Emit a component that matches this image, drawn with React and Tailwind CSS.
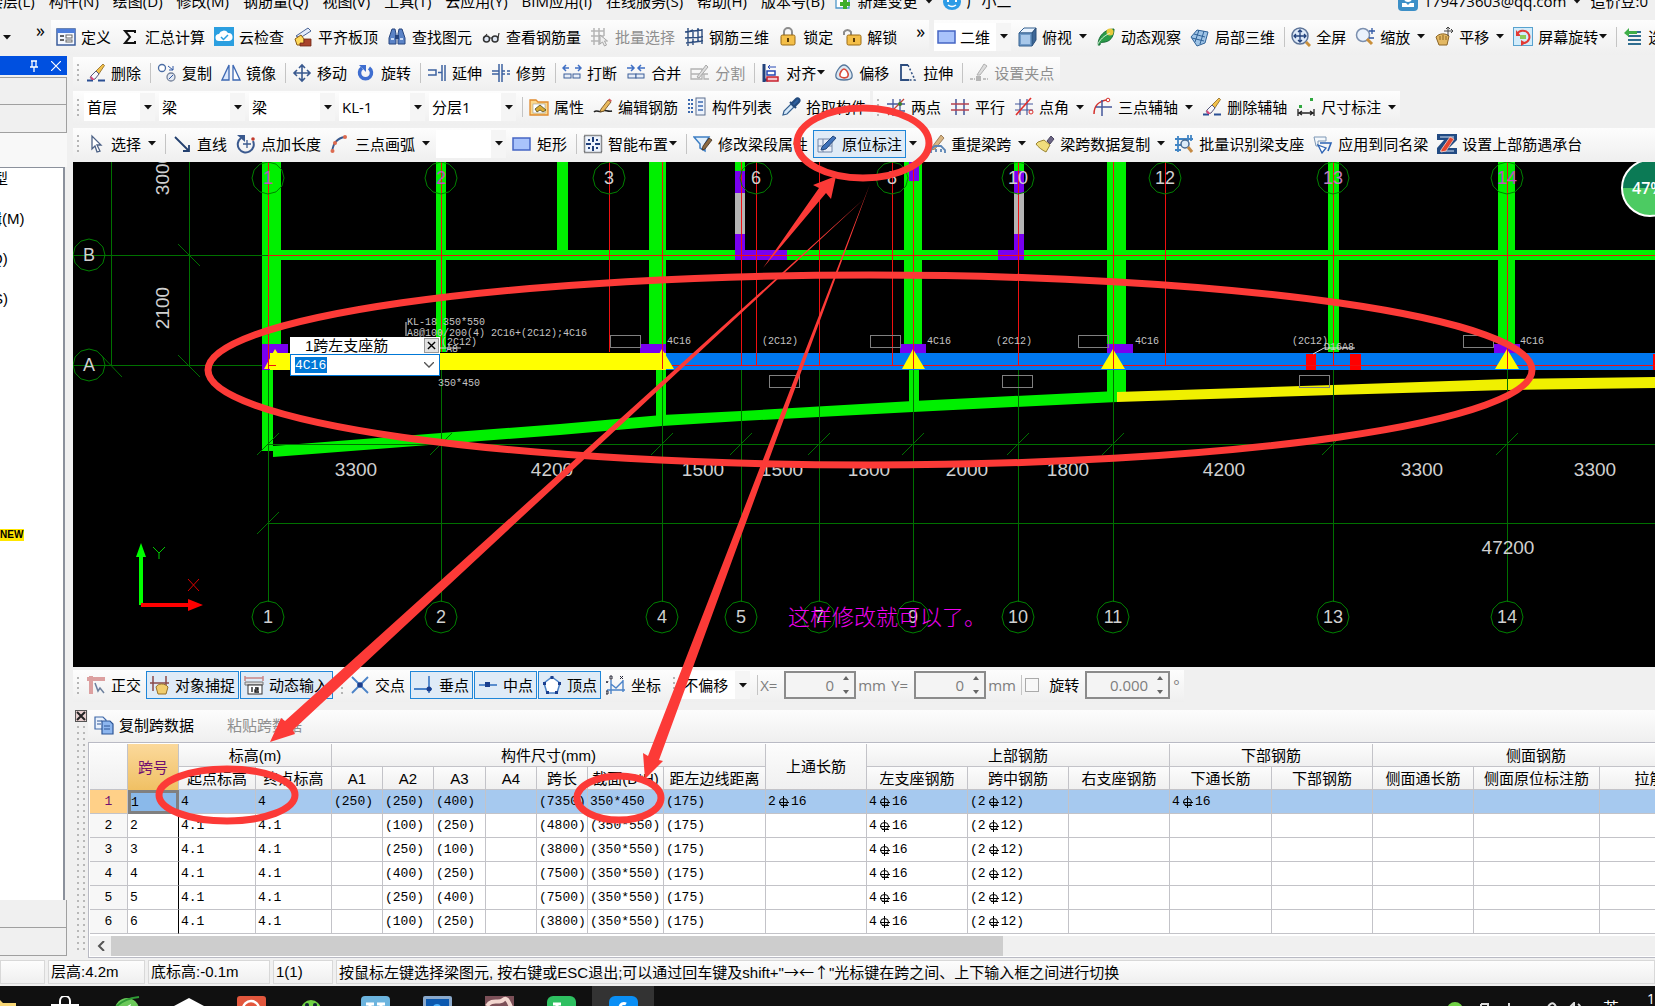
import { useState } from 'react';

const UI_FONT = 'font-["Open_Sans","Noto_Sans_CJK_SC",sans-serif]';
const SONG_FONT = 'font-["Liberation_Sans","Noto_Sans_CJK_SC",sans-serif]';
const RED = '#fc3a37';

/* ---------- toolbar icons, all on a 20x20 grid ---------- */

const eraser = (
    <>
        <path d="M1 17.5h6M12 17.5h7" stroke="#2a4f94" strokeWidth="2" />
        <path d="M9 9l8-8 1.5 1.5-6 9z" fill="#f2c14b" stroke="#8a6520" strokeWidth=".8" />
        <path d="M5 13l5-5 3 3-4 5c-3 1.5-6-1-4-3z" fill="#f7f7fb" stroke="#55557a" />
        <path d="M5 13l3.5 3.5-1 .5c-2 .5-4-2-2.5-4z" fill="#d9467a" />
    </>
);

const pencil = (
    <>
        <path d="M1 15c3-3 5 1 8-1s5 1 10 0" fill="none" stroke="#222" strokeWidth="1.6" />
        <path d="M8 12l7-9 3 2-7 9-4 1z" fill="#e9b95c" stroke="#6b4a1c" strokeWidth=".8" />
        <path d="M15 3l3 2 .8-1.5-2.5-2z" fill="#d65a5a" />
    </>
);

const ICONS = {
    define: (
        <>
            <rect x="1" y="2" width="18" height="16" fill="#f3f7ff" stroke="#3b5d9c" strokeWidth="1.5" />
            <rect x="1" y="2" width="18" height="4" fill="#4d7ddb" />
            <path d="M4 9h4M4 13h4" stroke="#333" strokeWidth="1.5" />
            <rect x="10" y="8" width="6" height="3" fill="#fff" stroke="#666" />
            <rect x="10" y="13" width="6" height="2" fill="#fff" stroke="#666" />
        </>
    ),
    sigma: <path d="M15 6V4H5l5 6-5 6h10v-2" fill="none" stroke="#111" strokeWidth="2" />,
    cloud: (
        <>
            <rect width="20" height="19" fill="#2b9fe0" />
            <path d="M5 14a3.5 3.5 0 010-7 5 5 0 019-1 4 4 0 011 8z" fill="#fff" />
            <path d="M7 10l2.5 2.5L14 8" fill="none" stroke="#2b9fe0" strokeWidth="1.5" />
        </>
    ),
    slab: (
        <>
            <path d="M3 9L15 1l3 3-11 7z" fill="#e4ecfa" stroke="#4a6496" />
            <path d="M2 12l6-4 3 4v6H4z" fill="#ffd95a" stroke="#8a5a12" />
            <path d="M11 12h7v7H7v-3h4z" fill="#a8432c" stroke="#6e2614" strokeWidth=".8" />
        </>
    ),
    find: (
        <>
            <path d="M5 2h3l1 5v10H2v-6zM12 2h3l3 9v6h-7V7z" fill="#5b83c6" stroke="#27457e" />
            <rect x="8" y="8" width="4" height="4" fill="#27457e" />
            <path d="M4 12h3M13 12h3" stroke="#c9daf5" strokeWidth="2" />
        </>
    ),
    glasses: (
        <>
            <circle cx="5.5" cy="12" r="3" fill="#dde6f3" stroke="#333" strokeWidth="1.5" />
            <circle cx="14" cy="12" r="3" fill="#dde6f3" stroke="#333" strokeWidth="1.5" />
            <path d="M8.5 11h2.5M3 11l3-4M17 11l1-5" stroke="#333" strokeWidth="1.2" fill="none" />
        </>
    ),
    batch: (
        <>
            <path d="M1 4h13M1 9h13M1 14h8M4 1v17M9 1v17M14 1v8" stroke="#b5b5b5" strokeWidth="1.5" />
            <path d="M10 8v9l2.5-2 2 4 2-1-2-4h3z" fill="#eee" stroke="#a5a5a5" />
        </>
    ),
    rebar3d: (
        <path d="M4 1v18M9 3v15M14 1v14M18 2v15M1 5l17-2M1 11l18-1M2 16l17-2M4 5l5-2" fill="none" stroke="#2d4d7f" strokeWidth="1.4" />
    ),
    lock: (
        <>
            <path d="M6 9V5a4 4 0 018 0v4" fill="none" stroke="#8d8d8d" strokeWidth="2" />
            <rect x="3" y="8" width="14" height="10" rx="1.5" fill="#f4bf49" stroke="#9a6a14" />
            <path d="M10 11v4" stroke="#5a3b07" strokeWidth="2" />
        </>
    ),
    unlock: (
        <>
            <path d="M2 8V5a4 4 0 017 0v4" fill="none" stroke="#8d8d8d" strokeWidth="2" />
            <rect x="5" y="8" width="14" height="10" rx="1.5" fill="#f4bf49" stroke="#9a6a14" />
            <path d="M12 11v4" stroke="#5a3b07" strokeWidth="2" />
        </>
    ),
    rect: <rect x="1" y="4" width="17" height="12" fill="#a9c3fb" stroke="#4565c4" strokeWidth="1.5" />,
    cube: (
        <>
            <path d="M2 6l5-5h12l-4 5z" fill="#eaf4ff" stroke="#35608f" />
            <path d="M15 6l4-5v12l-4 6z" fill="#3d6797" stroke="#2d4f78" />
            <path d="M2 6h13v13H2z" fill="#6f9ac8" stroke="#35608f" />
            <path d="M4 8h9v9H4z" fill="#a8c8ea" />
        </>
    ),
    orbit: (
        <>
            <path d="M2 18C2 9 9 2 18 2c0 5-2 12-9 13-3 .5-5 0-5 3z" fill="#2b9c49" stroke="#146b33" />
            <circle cx="14" cy="5" r="3.5" fill="#e8c93c" />
            <path d="M1 19c3-7 7-10 13-13" fill="none" stroke="#d7f0dc" />
        </>
    ),
    local3d: (
        <>
            <path d="M1 10l6-7 11 2-3 11-8 3z" fill="#9fc4e6" stroke="#2f6297" />
            <path d="M4 7l11 3M9 3L5 15M14 4l-4 13M2 11l12 3" stroke="#2f6297" fill="none" />
        </>
    ),
    full: (
        <>
            <circle cx="9" cy="9" r="8" fill="#dde9f8" stroke="#5c7397" strokeWidth="1.5" />
            <path d="M9 3v12M3 9h12M7 5l2-2 2 2M7 13l2 2 2-2M5 7L3 9l2 2M13 7l2 2-2 2" fill="none" stroke="#22417b" strokeWidth="1.3" />
            <path d="M15 15l4 4" stroke="#c98f3a" strokeWidth="3" />
        </>
    ),
    zoom: (
        <>
            <circle cx="8" cy="8" r="6.5" fill="#eaf2fc" stroke="#7b8fae" strokeWidth="1.5" />
            <path d="M12 12l5 5" stroke="#c98f3a" strokeWidth="3" />
            <path d="M17 1v6M14 4h6M14 11h5" stroke="#2f57a4" strokeWidth="1.3" />
        </>
    ),
    pan: (
        <>
            <path d="M2 10c3-4 10-4 13-1l-2 9H5z" fill="#e3b863" stroke="#8b6425" />
            <path d="M6 9v4M9 8v5M12 9v4" stroke="#8b6425" />
            <path d="M14 0v9M10 4h9M12 2l2-2 2 2M17 2l2 2-2 2" fill="none" stroke="#444" />
        </>
    ),
    screen: (
        <>
            <rect x=".5" y=".5" width="19" height="18" fill="#d3ecfa" stroke="#58a2cf" />
            <path d="M4 7a7 7 0 0111-1c3 4 1 9-4 10" fill="none" stroke="#e23b35" strokeWidth="2" />
            <path d="M3 3v6h5zM8 13v6l5-3z" fill="#e23b35" />
            <rect x="7" y="8" width="6" height="4" fill="#8ccb5b" />
        </>
    ),
    layers: (
        <>
            <path d="M3 5h15M5 9h13M5 13h13M5 17h13" stroke="#2f6d90" strokeWidth="2" />
            <path d="M1 6l5-5v3h8v3H6v3z" fill="#3fae49" />
        </>
    ),
    eraser,
    copy: (
        <>
            <circle cx="5" cy="5" r="3.5" fill="#fff" stroke="#4b6da4" strokeWidth="1.3" />
            <circle cx="14" cy="14" r="4" fill="#e4e9f2" stroke="#76839b" strokeWidth="1.3" />
            <path d="M11 3l5 4M16 3v4h-4M12 16l4-4" stroke="#2f57a4" fill="none" />
        </>
    ),
    mirror: (
        <>
            <path d="M8 2v15H1z" fill="#dae7fb" stroke="#3d68b3" strokeWidth="1.3" />
            <path d="M12 2v15h7z" fill="#fff" stroke="#3d68b3" strokeWidth="1.3" />
        </>
    ),
    move: (
        <path d="M10 2v16M2 10h16M7 5l3-3 3 3M7 15l3 3 3-3M5 7l-3 3 3 3M15 7l3 3-3 3" fill="none" stroke="#39598f" strokeWidth="1.6" />
    ),
    rotate: (
        <>
            <path d="M6 5a6 6 0 107 0" fill="none" stroke="#3f6ed0" strokeWidth="3.5" />
            <path d="M3 2h7v7z" fill="#3f6ed0" />
        </>
    ),
    extend: (
        <>
            <path d="M1 7h8v5H1M11 9.5h4" fill="none" stroke="#3d62a0" strokeWidth="1.5" />
            <path d="M15 2v16M18 2v16" stroke="#3d62a0" strokeWidth="1.5" />
        </>
    ),
    trim: (
        <>
            <path d="M8 1v18M11 1v18" stroke="#3d62a0" strokeWidth="1.5" />
            <path d="M1 8h7M1 11h7M11 8h3M11 11h3M16 8h3M16 11h3" stroke="#3d62a0" strokeWidth="1.5" />
        </>
    ),
    split: (
        <>
            <path d="M1 5h6M13 5h6M4 2L1 5l3 3M16 2l3 3-3 3" fill="none" stroke="#3f6fc4" strokeWidth="1.5" />
            <rect x="2" y="11" width="7" height="4" fill="#e6edf8" stroke="#3d5f98" />
            <rect x="11" y="11" width="7" height="4" fill="#e6edf8" stroke="#3d5f98" />
        </>
    ),
    merge: (
        <>
            <path d="M1 5h6M13 5h6M5 2l3 3-3 3M15 2l-3 3 3 3" fill="none" stroke="#3f6fc4" strokeWidth="1.5" />
            <rect x="2" y="11" width="8" height="4" fill="#e6edf8" stroke="#3d5f98" />
            <rect x="10" y="11" width="8" height="4" fill="#e6edf8" stroke="#3d5f98" />
        </>
    ),
    divide: (
        <>
            <path d="M1 6h11v10H1zM1 11h17M14 11v5h5" fill="none" stroke="#b3b3b3" strokeWidth="1.3" />
            <path d="M7 14l9-12 2 2-9 11z" fill="#ddd" stroke="#a9a9a9" />
        </>
    ),
    align: (
        <>
            <path d="M3 1v18" stroke="#22417b" strokeWidth="3" />
            <path d="M2 17h5" stroke="#22417b" strokeWidth="3" />
            <rect x="6" y="8" width="8" height="4" fill="#fff" stroke="#2748b5" strokeWidth="1.5" />
            <rect x="6" y="14" width="11" height="4" fill="#f4c1c8" stroke="#c8202e" strokeWidth="1.5" />
            <path d="M7 4h8M9 2L7 4l2 2" stroke="#2748b5" fill="none" />
        </>
    ),
    offset: (
        <>
            <path d="M10 2c4 0 9 8 8 12s-15 4-16 0 4-12 8-12z" fill="#dbe7f2" stroke="#56789c" strokeWidth="1.3" />
            <path d="M10 6c2 0 5 4 4 7s-7 2-8 0 2-7 4-7z" fill="#fff" stroke="#d84a3a" strokeWidth="1.6" />
        </>
    ),
    stretch: (
        <>
            <path d="M10 2H3v15h8" fill="none" stroke="#2d4d7f" strokeWidth="1.8" />
            <path d="M10 2l7 15h-6" fill="none" stroke="#2d4d7f" strokeWidth="1.5" strokeDasharray="2 2" />
        </>
    ),
    grip: (
        <>
            <path d="M1 16h5M14 16h5" stroke="#b0b0b0" strokeWidth="1.5" strokeDasharray="3 1" />
            <rect x="7" y="13" width="5" height="5" fill="#b5b5b5" />
            <path d="M8 12l7-11 3 2-7 9z" fill="#ddd" stroke="#b0b0b0" />
        </>
    ),
    props: (
        <>
            <path d="M1 3h6l2 2h10v13H1z" fill="#fbd88c" stroke="#e08a2e" strokeWidth="1.3" />
            <rect x="4" y="7" width="12" height="9" fill="#fff" stroke="#999" strokeWidth=".6" />
            <path d="M6 12l5-4 6 5-3 2-3-2-3 2z" fill="#d9a932" stroke="#4a4a20" strokeWidth=".8" />
        </>
    ),
    pencil,
    list: (
        <>
            <path d="M1 3h5M1 7h5M1 11h5M1 15h5" stroke="#3c69ae" strokeWidth="2" strokeDasharray="2 1" />
            <rect x="9" y="1" width="9" height="17" fill="#edf3fc" stroke="#5c6f8e" />
            <path d="M11 5h5M11 9h5M11 13h5" stroke="#3c69ae" strokeWidth="1.5" />
        </>
    ),
    picker: (
        <>
            <path d="M2 18l1-4 7-7 3 3-7 7z" fill="#d6e9fa" stroke="#35608f" strokeWidth="1.2" />
            <path d="M9 5l6 6M11 6l4-4c2-2 5 1 3 3l-4 4" fill="#2e5f9e" stroke="#234a7d" strokeWidth="2" />
        </>
    ),
    twoPoint: (
        <>
            <path d="M7 2v17M14 2v17M1 7h18M1 14h18" stroke="#44579b" strokeWidth="1.3" />
            <path d="M2 18L18 2" stroke="#c43f33" strokeWidth="1.3" />
            <circle cx="14" cy="7" r="2" fill="#3d7f2c" />
        </>
    ),
    parallel: (
        <>
            <path d="M6 2v16M14 2v16" stroke="#44579b" strokeWidth="1.5" />
            <path d="M1 7h18M1 13h18" stroke="#b5424f" strokeWidth="1.5" />
        </>
    ),
    angle: (
        <>
            <path d="M6 2v16M13 2v16M1 7h18M1 13h18" stroke="#44579b" strokeWidth="1.2" />
            <path d="M2 18L17 1" stroke="#e0302c" strokeWidth="1.6" />
            <circle cx="17" cy="15" r="2" fill="none" stroke="#e0302c" />
        </>
    ),
    threeAxis: (
        <>
            <path d="M1 17C1 9 6 4 14 3" fill="none" stroke="#d4302c" strokeWidth="1.5" />
            <path d="M9 3v16M3 10h16" stroke="#44579b" strokeWidth="1.5" />
            <circle cx="15" cy="3" r="1.8" fill="#fff" stroke="#d4302c" />
        </>
    ),
    dim: (
        <>
            <path d="M2 12v7M18 12v7M3 16h14M6 14l-3 2 3 2M14 14l3 2-3 2" fill="none" stroke="#222" strokeWidth="1.3" />
            <path d="M3 8h3v3H3zM14 1h3v3h-3z" fill="#2fa83e" />
        </>
    ),
    cursor: <path d="M6 2v13l3-3 2 6 3-1-3-6h4z" fill="#fff" stroke="#4d6286" strokeWidth="1.3" />,
    line: <path d="M3 3l14 14M17 11v6h-6" fill="none" stroke="#23406f" strokeWidth="1.8" />,
    addLen: (
        <>
            <path d="M5 4a8 8 0 1012 3" fill="none" stroke="#3a598e" strokeWidth="2" />
            <path d="M1 1h8v7z" fill="#3a598e" />
            <path d="M11 6v8M7 10h8" stroke="#3a598e" strokeWidth="1.3" />
            <circle cx="17" cy="5" r="1.8" fill="#c23a2c" />
        </>
    ),
    arc: (
        <>
            <path d="M2 18C3 9 7 4 15 3" fill="none" stroke="#3a598e" strokeWidth="1.8" />
            <circle cx="15" cy="3" r="2" fill="#dc6b50" />
            <circle cx="5" cy="9" r="2" fill="#dc6b50" />
            <circle cx="2.5" cy="17" r="2" fill="#dc6b50" />
        </>
    ),
    smart: (
        <>
            <rect x="1.5" y="1.5" width="17" height="17" fill="#eef4fd" stroke="#222" strokeDasharray="1 1" strokeWidth="1.5" />
            <path d="M10 3v5M10 12v5M3 10h5M12 10h5" stroke="#22417b" strokeWidth="2" />
            <path d="M5 5h2v2H5zM13 5h2v2h-2zM5 13h2v2H5zM13 13h2v2h-2z" fill="#22417b" />
        </>
    ),
    modify: (
        <>
            <path d="M1 3h15l-4 7v7l-5-3v-4z" fill="#e3f0fb" stroke="#3f7fc4" strokeWidth="1.5" />
            <path d="M10 12l6-8 3 2-7 9-3 1z" fill="#8c6a43" stroke="#3f2d1c" strokeWidth=".8" />
        </>
    ),
    origin: (
        <>
            <path d="M1 5h14v13H1zM6 5v13M1 12h14" fill="#e8eef8" stroke="#7086a8" />
            <path d="M5 13L16 2l3 2L9 15l-5 1z" fill="#3f72b9" stroke="#24487d" />
        </>
    ),
    respan: (
        <>
            <path d="M6 13l9-12 3 3-9 11-4 1z" fill="#d8b583" stroke="#8c6a43" strokeWidth=".8" />
            <path d="M5 19v-4l4-3h6l4 4v3M10 18v-3M15 18v-3" fill="none" stroke="#5a84b5" strokeWidth="1.8" />
        </>
    ),
    brush: (
        <>
            <path d="M12 7l4-5 3 3-4 5z" fill="#6d6685" stroke="#4b4660" />
            <path d="M3 8l6-2 6 5-4 7C7 16 3 13 1 10z" fill="#f0dd7c" stroke="#9a8432" />
        </>
    ),
    identify: (
        <>
            <path d="M1 5h18M1 11h6M1 16h6M4 2v16M14 1v6M17 1v6" stroke="#4185c5" strokeWidth="1.8" />
            <circle cx="11" cy="10" r="4" fill="#dcebf8" stroke="#486a92" strokeWidth="1.5" />
            <path d="M14 13l4 5" stroke="#c58a43" strokeWidth="3" />
        </>
    ),
    apply: (
        <>
            <path d="M1 3h12v4H5v5H3z" fill="#f4f8fc" stroke="#7c97b5" />
            <path d="M7 9h11l-3 8" fill="none" stroke="#2d63b4" strokeWidth="1.6" />
            <path d="M5 11l8 3-4 5z" fill="#fff" stroke="#2d63b4" strokeWidth="1.3" />
        </>
    ),
    top: (
        <>
            <path d="M0 0h20v6l-8 8h8v6H0v-6l7-8H0z" fill="#224b83" />
            <path d="M3 3h14M3 17h14" stroke="#d3e3f5" />
            <path d="M4 16L13 3l4 2-8 12-5 1z" fill="#e4462f" stroke="#f7d1c8" strokeWidth=".8" />
        </>
    ),
    ortho: (
        <>
            <path d="M1 4h18M5 1v18" stroke="#dca0a0" strokeWidth="4" />
            <path d="M9 8l3 8 2-3 4 5" fill="#eef" stroke="#6d809d" strokeWidth="1.5" />
        </>
    ),
    snap: (
        <>
            <path d="M3 1v15M16 1v15M0 8h19" stroke="#8a4b4b" strokeWidth="1.5" />
            <path d="M6 12c2-4 9-4 12 0l-2 7H8z" fill="#f1cd6d" stroke="#977027" />
        </>
    ),
    dyn: (
        <>
            <path d="M1 1v5M19 1v5M1 3h18" stroke="#c98787" strokeWidth="1.5" />
            <path d="M1 7h18v3H1z" fill="#ddd" stroke="#777" />
            <rect x="4" y="10" width="14" height="9" fill="#fff" stroke="#333" />
            <path d="M8 12v5M11 13h3v2h-3v2h4" fill="none" stroke="#111" strokeWidth="1.3" />
        </>
    ),
    cross: (
        <>
            <path d="M2 2l16 16M18 2L2 18" stroke="#4b83c8" strokeWidth="1.8" />
            <circle cx="10" cy="10" r="2.8" fill="#1b3f8e" />
        </>
    ),
    perp: (
        <>
            <path d="M0 14h18M15 1v17" stroke="#4b83c8" strokeWidth="1.8" />
            <circle cx="15" cy="14" r="2.5" fill="#1b3f8e" />
        </>
    ),
    mid: (
        <>
            <path d="M1 10h18" stroke="#4b83c8" strokeWidth="1.8" />
            <rect x="7" y="7" width="5" height="5" fill="#1b3f8e" />
        </>
    ),
    vertex: (
        <>
            <path d="M10 2l8 6-3 10H5L2 8z" fill="#fff" stroke="#4b83c8" strokeWidth="1.5" />
            <path d="M8.5 1h3v3h-3zM16 7h3v3h-3zM13 16h3v3h-3zM4 16h3v3H4zM1 7h3v3H1z" fill="#1b3f8e" />
        </>
    ),
    coord: (
        <>
            <path d="M5 5v14M1 15h18M5 9l5 4 7-7M17 5v12" fill="none" stroke="#4b83c8" strokeWidth="1.4" />
            <path d="M4 1h2v3H4zM14 1l3 3M17 1l-3 3M0 6l1 2 1-2M0 16h2v3H0z" fill="none" stroke="#223" />
        </>
    ),
    copyDoc: (
        <>
            <path d="M1 2h8l3 3v9H1z" fill="#eaf2fd" stroke="#3f68a8" strokeWidth="1.2" />
            <path d="M8 6h8l3 3v10H8z" fill="#8db6ef" stroke="#2d5595" strokeWidth="1.2" />
            <path d="M3 6h5M3 9h4M10 11h6M10 14h6" stroke="#2d5595" />
        </>
    ),
    newDoc: (
        <>
            <path d="M3 0h13v17H3z" fill="#fff" stroke="#4f97c9" strokeWidth="1.3" />
            <path d="M12 8v10M7 13h10" stroke="#3fae2b" strokeWidth="4" />
        </>
    ),
    bot: (
        <>
            <ellipse cx="10" cy="11" rx="9" ry="8" fill="#2d9be6" />
            <path d="M5 9h2v2H5zM13 9h2v2h-2z" fill="#fff" />
            <path d="M6 14q4 3 8 0" fill="none" stroke="#fff" strokeWidth="1.5" />
        </>
    ),
    user: (
        <>
            <rect width="20" height="20" rx="4" fill="#3c8fc7" />
            <circle cx="10" cy="7" r="4" fill="#fff" />
            <path d="M4 16v-4h4l2 2 2-2h4v4z" fill="#fff" />
        </>
    ),
};

function Icon({ name }) {
    return (
        <svg viewBox="0 0 20 20" className="h-5 w-5 shrink-0" aria-hidden="true">
            {ICONS[name]}
        </svg>
    );
}

function Caret() {
    return (
        <svg viewBox="0 0 8 5" className="h-[5px] w-2 shrink-0" aria-hidden="true">
            <path d="M0 0h8L4 4.5z" fill="#111" />
        </svg>
    );
}

/* caret: 'wide' for the split drop-downs, 'tight' for the ones glued to the label */
function Tool({ icon, label, caret, active, disabled }) {
    const state = active ? 'h-7 -mx-1 border border-[#1f86d8] bg-[#dfebf7] px-[3px]' : 'h-7';
    return (
        <div className="flex shrink-0 items-center">
            <button
                type="button"
                disabled={disabled}
                className={`flex items-center gap-[5px] whitespace-nowrap ${state} ${disabled ? 'text-[#8f8f8f]' : 'text-black'}`}
            >
                <Icon name={icon} />
                {label}
            </button>
            {caret === 'wide' && (
                <span className="flex w-[15px] justify-end">
                    <Caret />
                </span>
            )}
            {caret === 'tight' && (
                <span className="flex w-[9px] justify-end">
                    <Caret />
                </span>
            )}
        </div>
    );
}

function Sep() {
    return <span className="-mr-[3px] h-5 w-px shrink-0 bg-[#c4c4c4]" />;
}

function Grip() {
    return (
        <span className="-mr-1 flex w-1 shrink-0 flex-col gap-[3px]">
            {[0, 1, 2, 3].map((i) => (
                <i key={i} className="h-[2px] w-[2px] bg-[#b5b5b5]" />
            ))}
        </span>
    );
}

function Bar({ className = '', children }) {
    return (
        <div className={`flex shrink-0 items-center gap-[9px] bg-linear-to-b from-[#fdfdfd] to-[#efefef] pb-[2px] ${className}`}>
            {children}
        </div>
    );
}

function Combo({ label, value, width, children }) {
    return (
        <div className={`flex h-7 shrink-0 items-center bg-white ${width}`}>
            {children}
            <select aria-label={label} defaultValue={value} className="h-full min-w-0 flex-1 appearance-none bg-transparent pl-[3px] outline-none">
                <option value={value}>{value}</option>
            </select>
            <span className="flex h-full w-[15px] shrink-0 items-center justify-center bg-[#f5f5f5]">
                <Caret />
            </span>
        </div>
    );
}

/* ---------- menu and toolbars ---------- */

const MENUS = ['楼层(L)', '构件(N)', '绘图(D)', '修改(M)', '钢筋量(Q)', '视图(V)', '工具(T)', '云应用(Y)', 'BIM应用(I)', '在线服务(S)', '帮助(H)', '版本号(B)'];

function MenuBar() {
    return (
        <div className="h-5 overflow-hidden">
            <nav className="-mt-[11px] -ml-3 flex h-6 items-center whitespace-nowrap">
                <div className="flex items-center gap-[14px]">
                    {MENUS.map((m) => (
                        <button key={m} type="button">{m}</button>
                    ))}
                </div>
                <div className="ml-2 flex items-center gap-[9px]">
                    <Tool icon="newDoc" label="新建变更" caret="wide" />
                    <Tool icon="bot" label="广小二" />
                </div>
                <div className="ml-auto flex items-center gap-[9px] pr-[7px]">
                    <Tool icon="user" label="179473603@qq.com" caret="wide" />
                    <button type="button">造价豆:0</button>
                </div>
            </nav>
        </div>
    );
}

function ViewBar() {
    return (
        <div className="flex h-[35px] overflow-hidden">
            <div className="flex w-[51px] shrink-0 items-center pl-[3px]">
                <Caret />
                <span className="mb-4 ml-auto pr-[6px] text-lg leading-none">»</span>
            </div>
            <Bar className="mr-[5px] pr-1 pb-1 pl-[5px]">
                <Tool icon="define" label="定义" />
                <Tool icon="sigma" label="汇总计算" />
                <Tool icon="cloud" label="云检查" />
                <Tool icon="slab" label="平齐板顶" />
                <Tool icon="find" label="查找图元" />
                <Tool icon="glasses" label="查看钢筋量" />
                <Tool icon="batch" label="批量选择" disabled />
                <Tool icon="rebar3d" label="钢筋三维" />
                <Tool icon="lock" label="锁定" />
                <Tool icon="unlock" label="解锁" />
                <span className="mb-3 ml-[10px] text-lg leading-none">»</span>
            </Bar>
            <Bar className="flex-1 pb-1">
                <div className="-mr-[3px]">
                    <Combo label="视图" value="二维" width="w-[77px] pl-[3px]">
                        <Icon name="rect" />
                    </Combo>
                </div>
                <Tool icon="cube" label="俯视" caret="wide" />
                <Tool icon="orbit" label="动态观察" />
                <Tool icon="local3d" label="局部三维" />
                <Sep />
                <Tool icon="full" label="全屏" />
                <Tool icon="zoom" label="缩放" caret="wide" />
                <Tool icon="pan" label="平移" caret="wide" />
                <Tool icon="screen" label="屏幕旋转" caret="tight" />
                <Sep />
                <Tool icon="layers" label="选择楼层" />
            </Bar>
        </div>
    );
}

function EditBar() {
    return (
        <div className="flex h-[33px]">
            <Bar className="pr-[6px] pl-1">
                <Grip />
                <Tool icon="eraser" label="删除" />
                <Sep />
                <Tool icon="copy" label="复制" />
                <Tool icon="mirror" label="镜像" />
                <Sep />
                <Tool icon="move" label="移动" />
                <Tool icon="rotate" label="旋转" />
                <Sep />
                <Tool icon="extend" label="延伸" />
                <Tool icon="trim" label="修剪" />
                <Sep />
                <Tool icon="split" label="打断" />
                <Tool icon="merge" label="合并" />
                <Tool icon="divide" label="分割" disabled />
                <Sep />
                <Tool icon="align" label="对齐" caret="tight" />
                <Tool icon="offset" label="偏移" />
                <Tool icon="stretch" label="拉伸" />
                <Sep />
                <Tool icon="grip" label="设置夹点" disabled />
            </Bar>
        </div>
    );
}

function ComponentBar() {
    return (
        <div className="mt-px flex h-[34px]">
            <Bar className="mr-[3px] pr-1 pl-1">
                <Grip />
                <div className="-mr-[3px] -ml-[2px] flex gap-1">
                    <Combo label="楼层" value="首层" width="w-[71px]" />
                    <Combo label="构件类型" value="梁" width="w-[86px]" />
                    <Combo label="构件" value="梁" width="w-[86px]" />
                    <Combo label="名称" value="KL-1" width="w-[86px]" />
                    <Combo label="分层" value="分层1" width="w-[87px]" />
                </div>
                <Sep />
                <Tool icon="props" label="属性" />
                <Tool icon="pencil" label="编辑钢筋" />
                <Tool icon="list" label="构件列表" />
                <Tool icon="picker" label="拾取构件" />
            </Bar>
            <Bar className="pr-1 pl-1">
                <Grip />
                <Tool icon="twoPoint" label="两点" />
                <Tool icon="parallel" label="平行" />
                <Tool icon="angle" label="点角" caret="wide" />
                <Tool icon="threeAxis" label="三点辅轴" caret="wide" />
                <Tool icon="eraser" label="删除辅轴" />
                <Tool icon="dim" label="尺寸标注" caret="wide" />
            </Bar>
        </div>
    );
}

function DrawBar() {
    return (
        <Bar className="mt-[3px] mb-px h-[33px] overflow-hidden pl-1">
            <Grip />
            <Tool icon="cursor" label="选择" caret="wide" />
            <Sep />
            <Tool icon="line" label="直线" />
            <Tool icon="addLen" label="点加长度" />
            <Tool icon="arc" label="三点画弧" caret="wide" />
            <div className="-mx-[3px]">
                <Combo label="画弧参数" value="" width="w-[70px]" />
            </div>
            <Tool icon="rect" label="矩形" />
            <Sep />
            <Tool icon="smart" label="智能布置" caret="tight" />
            <Sep />
            <Tool icon="modify" label="修改梁段属性" />
            <Tool icon="origin" label="原位标注" caret="wide" active />
            <Tool icon="respan" label="重提梁跨" caret="wide" />
            <Tool icon="brush" label="梁跨数据复制" caret="wide" />
            <Tool icon="identify" label="批量识别梁支座" />
            <Tool icon="apply" label="应用到同名梁" />
            <Tool icon="top" label="设置上部筋遇承台" />
        </Bar>
    );
}

/* ---------- drawing area ---------- */

const BOTTOM_AXES = [
    [268, '1'], [441, '2'], [662, '4'], [741, '5'], [819, '7'],
    [913, '9'], [1018, '10'], [1113, '11'], [1333, '13'], [1507, '14'],
];
const TOP_AXES = [
    [268, '1', '#c050c0'], [441, '2', '#c050c0'], [609, '3'], [756, '6'], [892, '8'],
    [1018, '10'], [1165, '12'], [1333, '13', '#c080c0'], [1507, '14', '#c050c0'],
];
const RED_AXES = [268, 441, 609, 662, 741, 756, 819, 892, 913, 1018, 1113, 1165, 1333, 1507];
const DIMS = [
    [356, '3300'], [552, '4200'], [703, '1500'], [782, '1500'], [869, '1800'],
    [967, '2000'], [1068, '1800'], [1224, '4200'], [1422, '3300'], [1595, '3300'],
];
// x, y, width, height
const GREEN_BEAMS = [
    [262, 162, 19, 190], [262, 370, 11, 81], [436, 162, 10, 190], [557, 162, 11, 90],
    [649, 162, 17, 190], [656, 370, 10, 50], [735, 162, 10, 90], [904, 162, 18, 190],
    [909, 370, 10, 36], [1014, 162, 10, 90], [1107, 162, 19, 230], [1328, 162, 11, 190],
    [1498, 162, 17, 190], [262, 250, 2000, 10],
];
const COLUMNS = [
    [262, 344, 26, 26], [640, 344, 26, 9], [900, 344, 26, 9], [1107, 344, 26, 9], [1494, 344, 26, 9],
    [735, 171, 10, 22], [735, 234, 10, 26], [735, 250, 52, 10], [909, 162, 10, 19],
    [1014, 171, 10, 22], [1014, 234, 10, 26], [998, 250, 26, 10],
];
const NOTE_BOXES = [
    [610, 335], [870, 335], [1078, 335], [1463, 335], [769, 375], [1002, 375], [1299, 375],
];
const NOTES = [
    [667, '4C16'], [927, '4C16'], [1135, '4C16'], [1520, '4C16'],
    [762, '(2C12)'], [996, '(2C12)'], [1292, '(2C12)'],
];

function ring(x, y) {
    const pts = [];
    for (let i = 0; i < 12; i++) {
        const a = (i * Math.PI) / 6;
        pts.push(`${(x + 16 * Math.cos(a)).toFixed(1)},${(y + 16 * Math.sin(a)).toFixed(1)}`);
    }
    return pts.join(' ');
}

function AxisMark({ x, y, label, color = '#d0d0d0' }) {
    return (
        <>
            <polygon points={ring(x, y)} fill="none" stroke="#008000" />
            <text x={x} y={y + 6} textAnchor="middle" fontSize="18" fill={color}>{label}</text>
        </>
    );
}

function Drawing() {
    return (
        <svg className='block h-full w-full font-["Liberation_Sans",sans-serif]' role="img" aria-label="梁平面图">
            <g transform="translate(-73 -162)">
                <g fill="#00f000">
                    {GREEN_BEAMS.map(([x, y, w, h]) => (
                        <rect key={`${x}-${y}`} x={x} y={y} width={w} height={h} />
                    ))}
                    <polygon points="273,446 441,433 560,424 662,415 741,411 913,401 1117,391 1117,402 913,412 741,421 662,426 560,435 273,457" />
                </g>
                <polygon points="1117,392 1333,385 1507,379 1660,377 2200,370 2200,381 1660,388 1507,390 1333,395 1117,402" fill="#f0f000" />
                <rect x="735" y="193" width="10" height="41" fill="#b4b4b4" />
                <rect x="1014" y="193" width="10" height="41" fill="#b4b4b4" />
                <g fill="#7800f0">
                    {COLUMNS.map(([x, y, w, h]) => (
                        <rect key={`${x}-${y}`} x={x} y={y} width={w} height={h} />
                    ))}
                </g>
                <rect x="270" y="353" width="396" height="17" fill="#ffff00" />
                <rect x="666" y="353" width="1600" height="17" fill="#0078f0" />
                <g fill="#ff0000">
                    <rect x="1306" y="354" width="10" height="16" />
                    <rect x="1350" y="354" width="11" height="16" />
                    <rect x="1653" y="354" width="10" height="16" />
                </g>

                {/* axis lines */}
                <g stroke="#007000" shapeRendering="crispEdges">
                    {BOTTOM_AXES.map(([x]) => (
                        <path key={x} d={`M${x} 370V602`} />
                    ))}
                    <path d="M268 444H2200M268 523H2200M73 255H268M73 365H262M111 162V365M189 162V365" fill="none" />
                </g>
                <g stroke="#007000">
                    {BOTTOM_AXES.map(([x]) => (
                        <path key={x} d={`M${x - 11} 455L${x + 11} 433`} />
                    ))}
                    <path d="M257 534L279 512M178 244L200 266M178 355L200 377M101 355L122 377" />
                </g>
                <g stroke="#f01010" shapeRendering="crispEdges">
                    {RED_AXES.map((x) => (
                        <path key={x} d={`M${x} 162V${x === 441 || x === 609 ? 352 : 365}`} />
                    ))}
                    <path d="M268 255H2200M662 365H2200" />
                </g>
                <g fill="#ffff00">
                    <path d="M275 349L288 369H264zM662 349L674 369H650zM913 349L925 369H902zM1113 349L1125 369H1101zM1507 349L1519 369H1495z" />
                </g>
                <path d="M913 349V369M1113 349V369M1507 349V369M662 349V369M268 349V369M268 365H276" stroke="#f01010" shapeRendering="crispEdges" />

                {TOP_AXES.map(([x, label, color]) => (
                    <AxisMark key={x} x={x} y={178} label={label} color={color} />
                ))}
                {BOTTOM_AXES.map(([x, label]) => (
                    <AxisMark key={x} x={x} y={617} label={label} />
                ))}
                <AxisMark x={89} y={255} label="B" />
                <AxisMark x={89} y={365} label="A" />

                {/* dimensions */}
                <g fill="#d0d0d0" fontSize="19" textAnchor="middle">
                    {DIMS.map(([x, label]) => (
                        <text key={x} x={x} y={476}>{label}</text>
                    ))}
                    <text x="1508" y="554">47200</text>
                    <text transform="translate(169 174) rotate(-90)">3000</text>
                    <text transform="translate(169 308) rotate(-90)">2100</text>
                </g>

                {/* reinforcement notes */}
                <g className='font-["Liberation_Mono",monospace]' fill="#c4c4c4" fontSize="10">
                    {NOTES.map(([x, label]) => (
                        <text key={x} x={x} y={344}>{label}</text>
                    ))}
                    <text x="407" y="325">KL-18 350*550</text>
                    <text x="407" y="336">A8@100/200(4) 2C16+(2C12);4C16</text>
                    <text x="441" y="345">(2C12)</text>
                    <text x="446" y="352">A8</text>
                    <text x="438" y="386">350*450</text>
                    <text x="1324" y="350">D16A8</text>
                </g>
                <path d="M406 322V336M440 348H461M1313 354L1324 348H1355" fill="none" stroke="#e0e0e0" />
                <g fill="none" stroke="#808080" shapeRendering="crispEdges">
                    {NOTE_BOXES.map(([x, y]) => (
                        <rect key={x} x={x} y={y} width="30" height="12" />
                    ))}
                </g>

                {/* origin marker */}
                <path d="M141 543l5 14h-3v48h-4v-48h-3z" fill="#00ff00" />
                <path d="M203 605l-15-6v4h-47v4h47v4z" fill="#ff0000" />
                <path d="M153 547l6 6 6-6M159 553v6" fill="none" stroke="#00c800" />
                <path d="M188 579l11 12M199 579l-11 12" stroke="#d80000" />

                <text x="788" y="625" fontSize="22" fontWeight="300" fill="#f000f0" className='font-["Noto_Sans_CJK_SC",sans-serif]'>
                    这样修改就可以了。
                </text>
            </g>
        </svg>
    );
}

function SpanPopup() {
    const [value, setValue] = useState('4C16');
    return (
        <div className={`absolute top-[175px] left-[217px] w-[150px] bg-white text-[15px] leading-none ${SONG_FONT}`}>
            <div className="flex h-[17px] items-center justify-between pr-px pl-[15px]">
                <label htmlFor="span-rebar">1跨左支座筋</label>
                <button type="button" aria-label="关闭" className="flex h-[15px] w-[15px] items-center justify-center border border-[#999] bg-[#e1e1e1]">
                    <svg viewBox="0 0 10 10" className="h-[9px] w-[9px]"><path d="M1 1l8 8M9 1L1 9" stroke="#000" strokeWidth="1.5" /></svg>
                </button>
            </div>
            <div className="flex h-[22px] items-center justify-between border border-[#0078d7] pr-[5px] pl-1">
                <input
                    id="span-rebar"
                    value={value}
                    onChange={(e) => setValue(e.target.value)}
                    className='h-4 w-8 bg-[#0078d7] font-["Liberation_Mono",monospace] text-[13px] text-white outline-none'
                />
                <svg viewBox="0 0 10 6" className="h-[6px] w-[10px]"><path d="M0 0l5 5 5-5" fill="none" stroke="#555" strokeWidth="1.3" /></svg>
            </div>
        </div>
    );
}

function LoadBall() {
    return (
        <div className="absolute top-[-3px] right-[-24px] flex h-[58px] w-[58px] items-center rounded-full border-2 border-white bg-linear-to-b from-[#0b7a55] from-50% to-[#4ccb62] to-50% pl-[9px] text-base font-semibold text-white">
            47%
        </div>
    );
}

/* ---------- snap bar ---------- */

function Spin({ id, value, width }) {
    return (
        <span className={`flex h-7 shrink-0 items-center border-2 border-[#8b8b8b] bg-[#f4f4f4] ${width}`}>
            <input id={id} defaultValue={value} className="min-w-0 flex-1 bg-transparent pr-2 text-right text-[#7d7d7d] outline-none" />
            <svg viewBox="0 0 8 18" className="mr-1 h-[18px] w-2 shrink-0">
                <path d="M1 4l3-4 3 4zM1 14l3 4 3-4z" fill="#666" />
            </svg>
        </span>
    );
}

function SnapBar() {
    return (
        <div className="mt-[3px] flex h-8">
            <Bar className="pr-[3px] pl-1">
                <Grip />
                <Tool icon="ortho" label="正交" />
                <Tool icon="snap" label="对象捕捉" active />
                <Tool icon="dyn" label="动态输入" active />
                <span className="w-0" />
            </Bar>
            <Bar className="pr-[6px]">
                <Grip />
                <Tool icon="cross" label="交点" />
                <Tool icon="perp" label="垂点" active />
                <Tool icon="mid" label="中点" active />
                <Tool icon="vertex" label="顶点" active />
                <Tool icon="coord" label="坐标" />
            </Bar>
            <Bar className="pr-1 pl-[6px]">
                <Grip />
                <div className="-mr-[2px] -ml-[2px]">
                    <Combo label="偏移方式" value="不偏移" width="w-[70px]" />
                </div>
                <Sep />
                <div className="-ml-1 flex items-center text-[#7d7d7d]">
                    <label htmlFor="off-x" className="w-6">X=</label>
                    <Spin id="off-x" value="0" width="w-[72px]" />
                    <span className="ml-[2px] w-[33px]">mm</span>
                    <label htmlFor="off-y" className="w-[23px]">Y=</label>
                    <Spin id="off-y" value="0" width="w-[72px]" />
                    <span className="ml-[2px] w-[33px]">mm</span>
                    <span className="h-5 w-px bg-[#c4c4c4]" />
                    <input id="rot-on" type="checkbox" className="ml-[3px] h-[14px] w-[14px] appearance-none border border-[#aaa] bg-[#f8f8f8]" />
                    <label htmlFor="rot-on" className="ml-[10px] w-9 text-black">旋转</label>
                    <Spin id="rot" value="0.000" width="w-[85px]" />
                    <label htmlFor="rot" className="ml-[3px]">°</label>
                </div>
            </Bar>
        </div>
    );
}

/* ---------- span table ---------- */

const COL_WIDTHS = [
    'w-[38px]', 'w-[51px]', 'w-[77px]', 'w-[76px]', 'w-[51px]', 'w-[51px]', 'w-[52px]', 'w-[51px]', 'w-[51px]', 'w-[76px]',
    'w-[102px]', 'w-[101px]', 'w-[101px]', 'w-[101px]', 'w-[101px]', 'w-[102px]', 'w-[101px]', 'w-[101px]', 'w-[126px]', 'w-[100px]',
];
const SUB_HEADS = [
    '起点标高', '终点标高', 'A1', 'A2', 'A3', 'A4', '跨长', '截面(B*H)', '距左边线距离',
    '左支座钢筋', '跨中钢筋', '右支座钢筋', '下通长筋', '下部钢筋', '侧面通长筋', '侧面原位标注筋', '拉筋',
];
// "#" stands for the rebar grade sign
const SPANS = [
    ['1', '4', '4', '(250)', '(250)', '(400)', '', '(7350)', '350*450', '(175)', '2#16', '4#16', '(2#12)', '', '4#16'],
    ['2', '4.1', '4.1', '', '(100)', '(250)', '', '(4800)', '(350*550)', '(175)', '', '4#16', '(2#12)', '', ''],
    ['3', '4.1', '4.1', '', '(250)', '(100)', '', '(3800)', '(350*550)', '(175)', '', '4#16', '(2#12)', '', ''],
    ['4', '4.1', '4.1', '', '(400)', '(250)', '', '(7500)', '(350*550)', '(175)', '', '4#16', '(2#12)', '', ''],
    ['5', '4.1', '4.1', '', '(250)', '(400)', '', '(7500)', '(350*550)', '(175)', '', '4#16', '(2#12)', '', ''],
    ['6', '4.1', '4.1', '', '(100)', '(250)', '', '(3800)', '(350*550)', '(175)', '', '4#16', '(2#12)', '', ''],
];

function Rebar({ text }) {
    const [before, after] = text.split('#');
    if (after === undefined) return text;
    return (
        <span className="flex items-center">
            {before}
            <svg viewBox="0 0 15 14" className="h-[14px] w-[15px]" role="img" aria-label="C">
                <ellipse cx="7.5" cy="7" rx="4" ry="3.5" fill="none" stroke="#000" />
                <path d="M7.5 1v12M3 7.500h10M5 10.500h7" fill="none" stroke="#000" />
            </svg>
            {after}
        </span>
    );
}

const HEAD = 'border-r border-b border-[#c3c3c8] bg-linear-to-b from-[#fcfcfc] to-[#f0f0f0] p-0 font-normal';

function SpanTable() {
    return (
        <table className={`w-[1610px] table-fixed border-separate border-spacing-0 text-[15px] leading-none whitespace-nowrap ${SONG_FONT}`}>
            <colgroup>
                {COL_WIDTHS.map((w, i) => (
                    <col key={i} className={w} />
                ))}
            </colgroup>
            <thead>
                <tr className="h-[23px]">
                    <th rowSpan={2} className={HEAD} />
                    <th rowSpan={2} className="border-r border-[#c3c3c8] bg-linear-to-b from-[#fbd99b] to-[#f0c063] p-0 font-normal text-[#701070]">跨号</th>
                    <th colSpan={2} className={HEAD}>标高(m)</th>
                    <th colSpan={7} className={HEAD}>构件尺寸(mm)</th>
                    <th rowSpan={2} className={HEAD}>上通长筋</th>
                    <th colSpan={3} className={HEAD}>上部钢筋</th>
                    <th colSpan={2} className={HEAD}>下部钢筋</th>
                    <th colSpan={3} className={HEAD}>侧面钢筋</th>
                </tr>
                <tr className="h-[23px]">
                    {SUB_HEADS.map((h) => (
                        <th key={h} className={HEAD}>{h}</th>
                    ))}
                </tr>
            </thead>
            <tbody className='font-["Liberation_Mono","Noto_Sans_CJK_SC",monospace] text-[13px]'>
                {SPANS.map((row, r) => (
                    <tr key={row[0]} className={`h-6 ${r === 0 ? 'bg-[#a6c9ef]' : 'bg-white'}`}>
                        <th className={`border-r border-b border-[#c3c3c8] p-0 font-normal ${r === 0 ? 'bg-[#ffd088] text-[#701070]' : 'bg-[#f7f7f7]'}`}>{row[0]}</th>
                        {COL_WIDTHS.slice(1).map((w, c) => {
                            let edge = 'border-r border-b border-[#c3c3c8]';
                            if (c === 0) edge = r === 0 ? 'border-[3px] border-[#808080] bg-[#8ab9ea]' : 'border-r border-b border-r-black border-b-[#c3c3c8]';
                            return (
                                <td key={c} className={`py-0 pr-0 ${c === 0 && r === 0 ? 'pl-0' : 'pl-[2px]'} ${edge}`}>
                                    <Rebar text={row[c] ?? ''} />
                                </td>
                            );
                        })}
                    </tr>
                ))}
            </tbody>
        </table>
    );
}

function SpanPanel() {
    return (
        <section className="mt-2 flex h-[248px]">
            <div className="flex w-[15px] shrink-0 flex-col items-center overflow-hidden">
                <button type="button" aria-label="关闭面板" className="h-3 w-3 shrink-0 border border-[#555] bg-[#e8d0d0]">
                    <svg viewBox="0 0 10 10"><path d="M1 1l8 8M9 1L1 9" stroke="#222" strokeWidth="2" /></svg>
                </button>
                <div className="mt-1 grid grid-cols-2 gap-x-1 gap-y-1">
                    {Array.from({ length: 76 }, (_, i) => (
                        <i key={i} className="h-[2px] w-[2px] bg-[#b8b8b8]" />
                    ))}
                </div>
            </div>
            <div className="min-w-0 flex-1">
                <Bar className="h-8 pl-[6px]">
                    <Tool icon="copyDoc" label="复制跨数据" />
                    <button type="button" disabled className="ml-6 text-[#8f8f8f]">粘贴跨数据</button>
                </Bar>
                <div className="overflow-hidden border border-r-0 border-[#b9bac4] bg-white pt-px pl-px">
                    <SpanTable />
                    <div className="mt-[2px] flex h-5 items-center bg-[#f0f0f0]">
                        <button type="button" aria-label="向左滚动" className="flex w-[21px] shrink-0 justify-center">
                            <svg viewBox="0 0 8 10" className="h-[10px] w-2"><path d="M7 0L2 5l5 5" fill="none" stroke="#555" strokeWidth="2" /></svg>
                        </button>
                        <div className="h-full w-[57%] bg-[#cdcdcd]" />
                    </div>
                    <div className="h-px bg-white" />
                </div>
            </div>
        </section>
    );
}

/* ---------- left dock ---------- */

function Dock() {
    return (
        <aside className={`mt-px flex w-[67px] shrink-0 flex-col overflow-hidden text-[15px] ${SONG_FONT}`}>
            <div className="flex h-[19px] items-center justify-end gap-3 bg-[#0050e0] pr-[6px]">
                <svg viewBox="0 0 10 12" className="h-3 w-[10px]"><path d="M3 1v6M7 1v6M2 1h6M1 7h8M5 7v5" fill="none" stroke="#fff" strokeWidth="1.3" /></svg>
                <svg viewBox="0 0 10 10" className="h-[10px] w-[10px]"><path d="M0 0l10 10M10 0L0 10" stroke="#fff" strokeWidth="1.2" /></svg>
            </div>
            <div className="mt-[2px] h-7 border border-l-0 border-[#a0a0a0]" />
            <div className="h-7 border border-t-0 border-l-0 border-[#a0a0a0]" />
            <div className="h-[34px] bg-[#f8f8f8]" />
            <ul className="mr-[2px] flex flex-1 flex-col border-t border-r-2 border-[#8b919c] bg-white leading-5">
                <li className="mt-px -ml-[7px]">型</li>
                <li className="mt-5 -ml-[13px]">辑(M)</li>
                <li className="mt-5 -ml-[9px]">Q)</li>
                <li className="mt-5 -ml-[7px]">S)</li>
                <li className="mt-[220px] h-3 w-6 bg-[#ffe600] text-[10px] leading-3 font-bold">NEW</li>
            </ul>
            <div className="h-7 border border-t-0 border-l-0 border-[#a0a0a0]" />
            <div className="mb-[2px] h-7 border border-t-0 border-l-0 border-[#a0a0a0]" />
        </aside>
    );
}

/* ---------- bottom of the window ---------- */

function StatusBar() {
    const cell = 'flex h-6 items-center border border-[#d8d8d8] bg-linear-to-b from-[#fdfdfd] to-[#efefef] pl-[2px]';
    return (
        <footer className={`flex h-[28px] items-center gap-[3px] bg-[#f0f0f0] text-[15px] whitespace-nowrap ${SONG_FONT}`}>
            <div className={`${cell} w-[45px]`} />
            <div className={`${cell} w-[97px]`}>层高:4.2m</div>
            <div className={`${cell} w-[122px]`}>底标高:-0.1m</div>
            <div className={`${cell} w-[60px]`}>1(1)</div>
            <div className={`${cell} min-w-0 flex-1`}>
                <p>
                    按鼠标左键选择梁图元, 按右键或ESC退出;可以通过回车键及shift+"
                    <span className='font-["Noto_Sans_CJK_SC",sans-serif]'>→←↑</span>
                    "光标键在跨之间、上下输入框之间进行切换
                </p>
            </div>
        </footer>
    );
}

const TASKS = [
    <path d="M2 4h10l3 3h13v23H2z" fill="#f8d775" />,
    <><path d="M10 8V5a5 5 0 0110 0v3" fill="none" stroke="#fff" strokeWidth="2" /><path d="M1 8h28v22H1z" fill="#fff" /></>,
    <><circle cx="15" cy="14" r="12" fill="#6cc95a" /><path d="M4 11C10 4 18 2 27 1" fill="none" stroke="#2f9a35" strokeWidth="2" /><path d="M10 13l9-5-3 9z" fill="#fff" /></>,
    <path d="M0 10L15 2l15 8-15 9z" fill="#fff" />,
    <><rect x="1" width="29" height="30" rx="3" fill="#e2573d" /><circle cx="15" cy="13" r="8" fill="none" stroke="#fff" strokeWidth="2.5" /></>,
    <><ellipse cx="13" cy="14" rx="10" ry="10" fill="#6fd044" /><circle cx="9" cy="9" r="2" fill="#123" /><circle cx="17" cy="9" r="2" fill="#123" /></>,
    <><rect x="1" width="29" height="30" rx="4" fill="#6cb4de" /><path d="M6 8h8M17 8h8M10 8v12M21 8v12" stroke="#fff" strokeWidth="3" /></>,
    <><rect x="1" width="29" height="30" rx="2" fill="#8aa9cc" /><rect x="4" y="3" width="23" height="24" fill="#0b59b0" /><circle cx="15" cy="12" r="4" fill="#4fb4ff" /></>,
    <><rect x="1" width="29" height="30" fill="#7c5058" /><path d="M3 10c5-8 12-2 16-6s6 3 8 7" fill="none" stroke="#f2d6cf" strokeWidth="4" /></>,
    <><rect x="1" width="29" height="30" rx="6" fill="#2ec061" /><path d="M7 8h8M11 8v10" stroke="#fff" strokeWidth="3" /></>,
    <><rect x="1" width="29" height="30" rx="6" fill="#0a8ff5" /><path d="M18 8a4 4 0 00-6 3v6" fill="none" stroke="#fff" strokeWidth="3" /></>,
];

function TaskBar() {
    return (
        <div className="flex h-5 justify-between overflow-hidden bg-[#101010] text-white">
            <div className="-ml-[28px] flex">
                {TASKS.map((art, i) => (
                    <button key={i} type="button" aria-label={`任务 ${i + 1}`} className={`flex h-10 w-[62px] justify-center pt-[10px] ${i === 10 ? 'bg-[#333]' : ''}`}>
                        <svg viewBox="0 0 30 30" className="h-[30px] w-[30px]">{art}</svg>
                    </button>
                ))}
            </div>
            <div className="flex items-start gap-4">
                <svg viewBox="0 0 140 12" className="mt-4 h-3 w-[140px]">
                    <circle cx="8" cy="8" r="8" fill="#6fd044" />
                    <path d="M34 12V2M41 12V2M34 2h8M62 1v5M101 5c3-5 6-5 8 0M122 6l5-5v8M131 2q4 3 2 8" fill="none" stroke="#ddd" strokeWidth="2" />
                </svg>
                <span className="mt-3 text-base leading-5">英</span>
                <span className="mt-[3px] ml-3 w-2 overflow-hidden text-sm leading-5 whitespace-nowrap">15:20</span>
            </div>
        </div>
    );
}

/* hand-drawn marks that lie over the whole window */
function Marks() {
    return (
        <svg className="pointer-events-none absolute inset-0 h-full w-full" aria-hidden="true">
            <g fill="none" stroke={RED} strokeWidth="7">
                <ellipse cx="863" cy="143" rx="66" ry="35" />
                <ellipse cx="870" cy="370" rx="662" ry="95" />
                <ellipse cx="227" cy="795" rx="68" ry="26" />
                <ellipse cx="619" cy="798" rx="42" ry="22" />
            </g>
            <g fill={RED}>
                <polygon points="763,268 819,188 813,185 836,176 831,199 826,193" />
                <polygon points="865,198 285,721 281,718 270,742 295,734 293,730" />
                <polygon points="870,184 648,756 643,753 645,779 663,761 659,760" />
            </g>
        </svg>
    );
}

export default function App() {
    return (
        <div className={`relative flex min-h-screen flex-col overflow-hidden bg-[#f0f0f0] text-[15px] leading-5 text-black ${UI_FONT}`}>
            <MenuBar />
            <ViewBar />
            <div className="flex">
                <Dock />
                <main className="ml-[6px] min-w-0 flex-1 pt-[2px]">
                    <EditBar />
                    <ComponentBar />
                    <DrawBar />
                    <div className="relative h-[505px] overflow-hidden bg-black">
                        <Drawing />
                        <SpanPopup />
                        <LoadBall />
                    </div>
                    <SnapBar />
                    <SpanPanel />
                </main>
            </div>
            <StatusBar />
            <TaskBar />
            <Marks />
        </div>
    );
}
